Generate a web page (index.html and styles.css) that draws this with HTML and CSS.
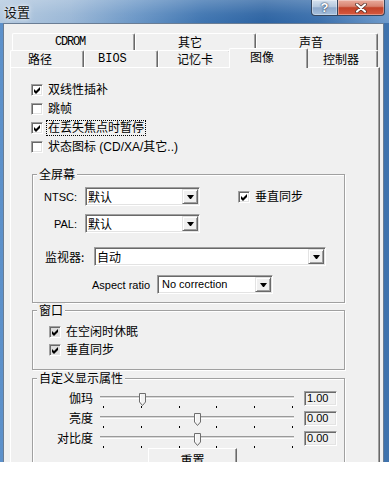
FILE: index.html
```html
<!DOCTYPE html>
<html>
<head>
<meta charset="utf-8">
<link rel="stylesheet" href="styles.css">
</head>
<body>
<div class="window">
  <div class="titlebar">
    <span class="title">设置</span>
    <div class="caption">
      <span class="cbtn help">?</span>
      <span class="cbtn close">
        <svg width="12" height="10" viewBox="0 0 12 10"><path d="M2 1.5 L10 8.5 M10 1.5 L2 8.5" stroke="#4a2a24" stroke-width="3.6" stroke-linecap="round"/><path d="M2 1.5 L10 8.5 M10 1.5 L2 8.5" stroke="#fff" stroke-width="2.2" stroke-linecap="round"/></svg>
      </span>
    </div>
  </div>
  <div class="client">
    <div class="tabs">
      <div class="tabrow back">
        <div class="tab t-cd mono">CDROM</div>
        <div class="tab t-qt">其它</div>
        <div class="tab t-sy">声音</div>
      </div>
      <div class="tabrow front">
        <div class="tab t-lj">路径</div>
        <div class="tab t-bios mono">BIOS</div>
        <div class="tab t-jyk">记忆卡</div>
        <div class="tab t-tx active">图像</div>
        <div class="tab t-kzq">控制器</div>
      </div>
    </div>
    <div class="panel">
      <div class="checks">
        <div class="chk"><span class="box on"><svg width="7" height="7" viewBox="0 0 7 7"><polygon points="0,2 2,4 6,0 6,3 2,7 0,5" fill="#000"/></svg></span><span>双线性插补</span></div>
        <div class="chk"><span class="box"></span><span>跳帧</span></div>
        <div class="chk"><span class="box on"><svg width="7" height="7" viewBox="0 0 7 7"><polygon points="0,2 2,4 6,0 6,3 2,7 0,5" fill="#000"/></svg></span><span class="focus">在丢失焦点时暂停</span></div>
        <div class="chk"><span class="box"></span><span>状态图标 (CD/XA/其它..)</span></div>
      </div>

      <fieldset class="group g-full">
        <legend>全屏幕</legend>
        <div class="frow fr1">
          <span class="flbl latin">NTSC:</span>
          <div class="combo c-small"><span class="val">默认</span><span class="drop"><svg width="7" height="4" viewBox="0 0 7 4"><polygon points="0,0 7,0 4,4 3,4" fill="#000"/></svg></span></div>
          <div class="chk vsync"><span class="box on"><svg width="7" height="7" viewBox="0 0 7 7"><polygon points="0,2 2,4 6,0 6,3 2,7 0,5" fill="#000"/></svg></span><span>垂直同步</span></div>
        </div>
        <div class="frow fr2">
          <span class="flbl latin">PAL:</span>
          <div class="combo c-small"><span class="val">默认</span><span class="drop"><svg width="7" height="4" viewBox="0 0 7 4"><polygon points="0,0 7,0 4,4 3,4" fill="#000"/></svg></span></div>
        </div>
        <div class="frow fr3">
          <span class="mlbl">监视器:</span>
          <div class="combo c-wide"><span class="val">自动</span><span class="drop"><svg width="7" height="4" viewBox="0 0 7 4"><polygon points="0,0 7,0 4,4 3,4" fill="#000"/></svg></span></div>
        </div>
        <div class="frow fr4">
          <span class="alabel latin">Aspect ratio</span>
          <div class="combo c-aspect"><span class="val latin">No correction</span><span class="drop"><svg width="7" height="4" viewBox="0 0 7 4"><polygon points="0,0 7,0 4,4 3,4" fill="#000"/></svg></span></div>
        </div>
      </fieldset>

      <fieldset class="group g-win">
        <legend>窗口</legend>
        <div class="chk wchk first"><span class="box on grey"><svg width="7" height="7" viewBox="0 0 7 7"><polygon points="0,2 2,4 6,0 6,3 2,7 0,5" fill="#000"/></svg></span><span>在空闲时休眠</span></div>
        <div class="chk wchk"><span class="box on grey"><svg width="7" height="7" viewBox="0 0 7 7"><polygon points="0,2 2,4 6,0 6,3 2,7 0,5" fill="#000"/></svg></span><span>垂直同步</span></div>
      </fieldset>

      <fieldset class="group g-custom">
        <legend>自定义显示属性</legend>
        <div class="srow first">
          <span class="slbl">伽玛</span>
          <div class="slider">
            <div class="track">
              <svg class="thumb" style="left:39px" width="7" height="13" viewBox="0 0 7 13"><path d="M0.5 0.5 H6.5 V9 L3.5 12.5 L0.5 9 Z" fill="#f2f2f2" stroke="#6e6e6e"/><path d="M1.5 1.5 V9" stroke="#fff"/></svg>
            </div>
            <div class="ticks"><i></i><i></i><i></i><i></i><i></i><i></i></div>
          </div>
          <span class="vbox latin">1.00</span>
        </div>
        <div class="srow">
          <span class="slbl">亮度</span>
          <div class="slider">
            <div class="track">
              <svg class="thumb" style="left:94px" width="7" height="13" viewBox="0 0 7 13"><path d="M0.5 0.5 H6.5 V9 L3.5 12.5 L0.5 9 Z" fill="#f2f2f2" stroke="#6e6e6e"/><path d="M1.5 1.5 V9" stroke="#fff"/></svg>
            </div>
            <div class="ticks"><i></i><i></i><i></i><i></i><i></i><i></i></div>
          </div>
          <span class="vbox latin">0.00</span>
        </div>
        <div class="srow">
          <span class="slbl">对比度</span>
          <div class="slider">
            <div class="track">
              <svg class="thumb" style="left:94px" width="7" height="13" viewBox="0 0 7 13"><path d="M0.5 0.5 H6.5 V9 L3.5 12.5 L0.5 9 Z" fill="#f2f2f2" stroke="#6e6e6e"/><path d="M1.5 1.5 V9" stroke="#fff"/></svg>
            </div>
            <div class="ticks"><i></i><i></i><i></i><i></i><i></i><i></i></div>
          </div>
          <span class="vbox latin">0.00</span>
        </div>
        <div class="btnrow"><span class="button">重置</span></div>
      </fieldset>
    </div>
  </div>
</div>
</body>
</html>
```
FILE: styles.css
```css
* { box-sizing: border-box; }
html, body { margin: 0; padding: 0; }
body {
  width: 389px;
  height: 481px;
  overflow: hidden;
  background: #fff;
  font-family: "Liberation Sans", "Noto Sans CJK SC", sans-serif;
  font-size: 12px;
  line-height: 14px;
  color: #000;
}
.window {
  height: 462px;
  display: flex;
  flex-direction: column;
  background: linear-gradient(90deg, #5d91cb 0%, #4a7fbb 50%, #3f73ad 100%);
  overflow: hidden;
}
.titlebar {
  height: 23px;
  flex: none;
  display: flex;
  align-items: flex-start;
  background:
    linear-gradient(180deg, rgba(255,255,255,0.22) 0%, rgba(255,255,255,0.05) 60%, rgba(255,255,255,0) 100%),
    linear-gradient(90deg, #b3c9df 0%, #9ab7d6 18%, #6a96c6 35%, #3e74b0 52%, #2c63a2 68%, #3a6fac 82%, #6e9acb 100%);
}
.title {
  padding: 4px 0 0 4px;
  font-family: "Noto Sans CJK SC", sans-serif;
  font-size: 13px;
  line-height: 15px;
  color: #111;
  text-shadow: 0 0 6px rgba(255,255,255,0.9), 0 0 3px rgba(255,255,255,0.8);
}
.caption {
  margin-left: auto;
  margin-right: 4px;
  display: flex;
}
.cbtn {
  height: 16px;
  display: flex;
  align-items: center;
  justify-content: center;
  border: 1px solid #34465f;
  border-top: none;
  box-shadow: inset 0 0 0 1px rgba(255,255,255,0.35);
}
.help {
  width: 27px;
  border-radius: 0 0 0 4px;
  background: linear-gradient(180deg, #d6e2ef 0%, #b4c8de 45%, #8ea9cb 52%, #a5bfdc 100%);
  color: #fff;
  font-family: "Liberation Sans", sans-serif;
  font-weight: bold;
  font-size: 13px;
  text-shadow: 0 0 2px #243a58, 0 0 1px #243a58;
}
.close {
  width: 47px;
  border-left: none;
  border-radius: 0 0 4px 0;
  background: linear-gradient(180deg, #e9ab9c 0%, #d88370 42%, #c24228 52%, #d6593f 100%);
}
.client {
  flex: 1;
  margin: 0 5px 0 3px;
  background: #f0f0f0;
  border: 1px solid #6a7d94;
  border-bottom: none;
  display: flex;
  flex-direction: column;
  overflow: hidden;
}
.tabs { padding-top: 9px; flex: none; }
.tabrow { display: flex; height: 17px; }
.tabrow.back { margin-left: 8px; }
.tabrow.front { margin-left: 6px; }
.tab {
  height: 17px;
  border-top: 1px solid #fff;
  border-left: 1px solid #fff;
  border-right: 1px solid #696969;
  box-shadow: inset -1px 0 0 #a0a0a0;
  border-radius: 2px 2px 0 0;
  background: #f0f0f0;
  font-family: "Noto Sans CJK SC", sans-serif;
  line-height: 16px;
  white-space: nowrap;
}
.mono {
  font-family: "Liberation Mono", monospace;
  font-size: 12px;
}
.t-cd { width: 123px; padding-left: 42px; letter-spacing: -1.2px; }
.t-qt { width: 121px; padding-left: 42px; }
.t-sy { width: 122px; padding-left: 42px; }
.t-lj { width: 74px; padding-left: 17px; }
.t-bios { width: 74px; padding-left: 13px; }
.t-jyk { width: 73px; padding-left: 18px; }
.t-tx { width: 75px; padding-left: 18px; }
.t-kzq { width: 72px; padding-left: 16px; }
.tab.active {
  position: relative;
  z-index: 1;
  width: 79px;
  height: 20px;
  margin: -2px -2px 0 -2px;
  padding-left: 20px;
  line-height: 16px;
}
.panel {
  flex: 1;
  margin: 0 3px 0 6px;
  background: #f0f0f0;
  border: 1px solid;
  border-color: #fff #696969 #696969 #fff;
  box-shadow: inset -1px 0 0 #a0a0a0;
  padding-top: 12px;
}
.checks { padding-left: 20px; }
.chk {
  display: flex;
  align-items: center;
  height: 19px;
  font-family: "Liberation Sans", "Noto Sans CJK SC", sans-serif;
  white-space: nowrap;
}
.box {
  width: 12px;
  height: 12px;
  flex: none;
  margin-right: 5px;
  background: #fff;
  border: 1px solid;
  border-color: #a0a0a0 #fff #fff #a0a0a0;
  box-shadow: inset 1px 1px 0 #696969, inset -1px -1px 0 #e3e3e3;
  display: flex;
  align-items: center;
  justify-content: center;
}
.box svg { display: block; margin: 1px 0 0 0; }
.box.grey { background: #dedede; }
.focus {
  outline: 1px dotted #000;
  padding: 0 1px;
  margin-left: -1px;
  line-height: 14px;
}
.latin {
  font-family: "Liberation Sans", sans-serif;
  font-size: 11px;
}
.group {
  width: 313px;
  margin: 0 0 0 21px;
  padding: 0;
  min-width: 0;
  border: 1px solid #a0a0a0;
  box-shadow: inset 1px 1px 0 #fff, 1px 1px 0 #fff;
}
.group legend {
  margin-left: 4px;
  padding: 0 2px;
  height: 14px;
  line-height: 14px;
  background: #f0f0f0;
  font-family: "Noto Sans CJK SC", sans-serif;
}
.g-full { margin-top: 11px; padding-bottom: 8px; }
.g-win { margin-top: 0; padding-bottom: 10px; }
.g-custom { margin-top: 1px; height: 100px; }
.frow { display: flex; align-items: center; height: 19px; }
.fr1 { margin-top: 6px; }
.fr2 { margin-top: 8px; }
.fr3 { margin-top: 14px; padding-left: 12px; }
.fr4 { margin-top: 9px; padding-left: 59px; }
.flbl { width: 44px; text-align: right; margin-right: 8px; }
.mlbl { width: 42px; margin-right: 7px; font-family: "Noto Sans CJK SC", sans-serif; }
.alabel { width: 55px; margin-right: 10px; white-space: nowrap; }
.combo {
  height: 19px;
  display: flex;
  align-items: stretch;
  background: #fff;
  border: 1px solid;
  border-color: #a0a0a0 #fff #fff #a0a0a0;
  box-shadow: inset 1px 1px 0 #696969, inset -1px -1px 0 #e3e3e3;
  padding: 1px;
}
.c-small { width: 115px; }
.c-wide { width: 232px; }
.c-aspect { width: 116px; }
.combo .val {
  flex: 1;
  padding-left: 1px;
  line-height: 15px;
  font-family: "Noto Sans CJK SC", sans-serif;
}
.combo .val.latin { font-family: "Liberation Sans", sans-serif; padding-left: 3px; }
.drop {
  width: 16px;
  flex: none;
  background: #f0f0f0;
  border: 1px solid;
  border-color: #e3e3e3 #696969 #696969 #e3e3e3;
  box-shadow: inset 1px 1px 0 #fff, inset -1px -1px 0 #a0a0a0;
  display: flex;
  align-items: center;
  justify-content: center;
}
.drop svg { display: block; }
.vsync { margin-left: 38px; height: 19px; }
.wchk { height: 18px; padding-left: 16px; }
.wchk.first { margin-top: 6px; }
.srow { display: flex; height: 20px; }
.srow.first { margin-top: 3px; }
.slbl {
  width: 60px;
  margin-right: 7px;
  text-align: right;
  line-height: 20px;
  font-family: "Noto Sans CJK SC", sans-serif;
}
.slider {
  width: 194px;
  padding-top: 8px;
  display: flex;
  flex-direction: column;
}
.track {
  position: relative;
  height: 3px;
  background: #d8d8d8;
  border-top: 1px solid #9a9a9a;
  border-bottom: 1px solid #fff;
}
.thumb { position: absolute; top: -4px; display: block; }
.ticks {
  margin-top: 7px;
  display: flex;
  justify-content: space-between;
  padding: 0 1px 0 3px;
}
.ticks i { display: block; width: 1px; height: 2px; background: #000; }
.vbox {
  width: 33px;
  height: 15px;
  margin: 3px 0 0 10px;
  background: #f0f0f0;
  border: 1px solid;
  border-color: #a0a0a0 #fff #fff #a0a0a0;
  box-shadow: inset 1px 1px 0 #696969, inset -1px -1px 0 #e3e3e3;
  padding-left: 2px;
  line-height: 13px;
}
.btnrow { padding-left: 115px; }
.button {
  display: block;
  width: 89px;
  height: 24px;
  background: #f0f0f0;
  border: 1px solid;
  border-color: #fff #696969 #696969 #fff;
  box-shadow: inset -1px -1px 0 #a0a0a0;
  text-align: center;
  line-height: 22px;
  font-family: "Noto Sans CJK SC", sans-serif;
}
```
